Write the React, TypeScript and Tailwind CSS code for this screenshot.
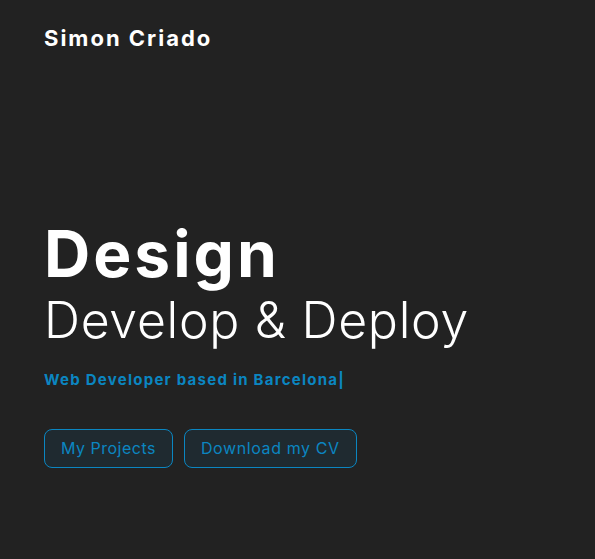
const App = () => {
    return (
        <div className="min-h-screen bg-[#222222] text-white font-['Inter',sans-serif]">
            {/* Header */}
            <header className="px-[44px] pt-[24px]">
                <span className="text-[22px] font-bold leading-[28px] tracking-[2px]">Simon Criado</span>
            </header>

            {/* Hero */}
            <section className="px-[44px] pt-[166px]">
                <h1 className="text-[64px] font-bold leading-[72px] tracking-[3px]">Design</h1>
                <h2 className="mt-[1px] text-[50px] font-light leading-[58px] tracking-[0.7px]">Develop &amp; Deploy</h2>
                <p className="mt-[20px] text-[15px] font-bold text-[#0b86c1] tracking-[1.25px]">Web Developer based in Barcelona|</p>

                {/* Actions */}
                <div className="mt-[37px] flex gap-[11px]">
                    <button className="h-[39px] px-[16px] rounded-[8px] border border-[#0b86c1] bg-[#1f2a30] text-[#0b86c1] text-[16px] tracking-[0.5px]">
                        My Projects
                    </button>
                    <button className="h-[39px] px-[16px] rounded-[8px] border border-[#0b86c1] bg-[#1f2a30] text-[#0b86c1] text-[16px] tracking-[0.6px]">
                        Download my CV
                    </button>
                </div>
            </section>
        </div>
    );
};

export default App;
